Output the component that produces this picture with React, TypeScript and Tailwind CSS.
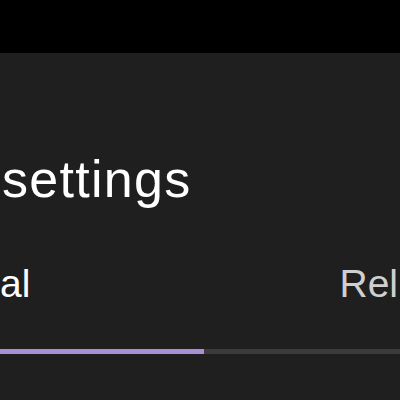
export default function App() {
  return (
    <div className="flex h-[400px] w-[400px] flex-col overflow-hidden bg-[#1f1f1f] text-white" style={{ fontFamily: '"Liberation Sans", Arial, sans-serif' }}>
      {/* Status bar */}
      <div className="h-[53px] shrink-0 bg-black" />

      {/* Title */}
      <h1 className="mt-[100px] whitespace-nowrap pl-[2px] text-[52px] leading-[52px] font-normal tracking-[1.3px] text-white">
        settings
      </h1>

      {/* Tabs */}
      <div className="mt-[59px] flex items-start whitespace-nowrap text-[39px] leading-[39px]">
        <span className="text-white">al</span>
        <span className="ml-auto pr-[2px] text-[#cfcfcf]">Rel</span>
      </div>

      {/* Tab indicator */}
      <div className="mt-[46px] flex h-[5px]">
        <div className="w-[204px] bg-[#a98fd6]" />
        <div className="flex-1 bg-[#3b3b3b]" />
      </div>
    </div>
  )
}
